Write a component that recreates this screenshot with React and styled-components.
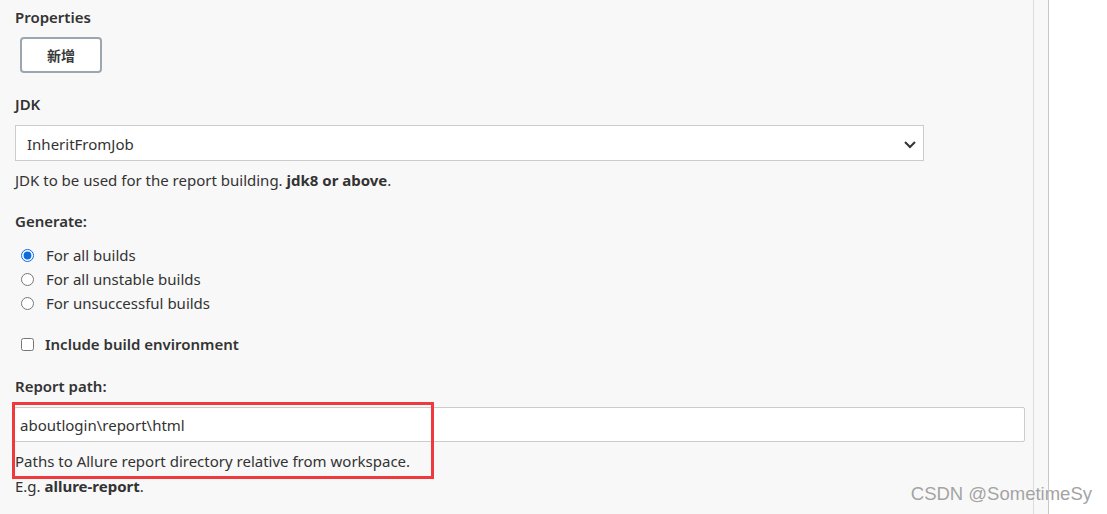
import styled, { createGlobalStyle } from "styled-components";

const GlobalStyle = createGlobalStyle`
  html, body {
    margin: 0;
    padding: 0;
    background: #ffffff;
  }
  body {
    font-family: "Noto Sans", "Open Sans", "Noto Sans CJK SC", sans-serif;
    color: #333333;
  }
`;

const Page = styled.div`
  display: flex;
  width: 1107px;
  height: 514px;
  overflow: hidden;
  position: relative;
`;

const Main = styled.div`
  width: 1033px;
  flex-shrink: 0;
  background: #f8f8f8;
  padding-left: 15px;
  box-sizing: border-box;
  display: flex;
  flex-direction: column;
`;

const Rule = styled.div`
  width: 1px;
  flex-shrink: 0;
  background: ${(p) => p.$color};
`;

const Strip = styled.div`
  width: 14px;
  flex-shrink: 0;
  background: #f8f8f8;
`;

const Side = styled.div`
  flex: 1;
  background: #ffffff;
`;

const Label = styled.div`
  font-size: 15px;
  font-weight: 600;
  line-height: 20px;
  margin-top: ${(p) => p.$top}px;
`;

const AddButton = styled.button`
  margin: 10px 0 0 5px;
  width: 82px;
  height: 36px;
  box-sizing: border-box;
  background: #ffffff;
  border: 2px solid #9ca6b0;
  border-radius: 4px;
  font-family: "Noto Sans CJK SC", sans-serif;
  font-size: 14px;
  font-weight: 700;
  color: #3a3a3a;
  padding: 0;
`;

const SelectBox = styled.div`
  margin-top: 11px;
  width: 909px;
  height: 36px;
  box-sizing: border-box;
  background: #ffffff;
  border: 1px solid #cccccc;
  display: flex;
  align-items: center;
  justify-content: space-between;
  padding: 2px 6px 0 11px;
  font-size: 15px;
`;

const Help = styled.div`
  font-size: 15px;
  line-height: ${(p) => p.$lh || 20}px;
  margin-top: ${(p) => p.$top}px;

  & b {
    font-weight: 700;
  }
`;

const OptionList = styled.div`
  margin-top: 12px;
  display: flex;
  flex-direction: column;
`;

const Option = styled.label`
  display: flex;
  align-items: center;
  height: 24px;
  font-size: 15px;
  font-weight: ${(p) => (p.$bold ? 600 : 400)};

  & input {
    margin: 0 ${(p) => (p.$bold ? 11 : 12)}px 0 6px;
    width: 13px;
    height: 13px;
    accent-color: #0b6be0;
  }
`;

const CheckRow = styled(Option)`
  margin-top: 17px;
`;

const PathBlock = styled.div`
  position: relative;
  display: flex;
  flex-direction: column;
`;

const TextInput = styled.div`
  margin: 11px 0 0 -1px;
  width: 1011px;
  height: 35px;
  box-sizing: border-box;
  background: #ffffff;
  border: 1px solid #cccccc;
  border-radius: 2px;
  display: flex;
  align-items: center;
  padding-left: 5px;
  font-size: 15px;
`;

const Highlight = styled.div`
  position: absolute;
  left: -3px;
  top: 46px;
  width: 422px;
  height: 77px;
  box-sizing: border-box;
  border: 3px solid #ee3a3c;
`;

const Watermark = styled.div`
  position: absolute;
  right: 15px;
  bottom: 9px;
  font-family: "Liberation Sans", Arial, sans-serif;
  font-size: 18.5px;
  color: #a3a3a3;
  text-shadow: 0 0 1px #ffffff;
`;

const Chevron = () => (
  <svg width="14" height="14" viewBox="0 0 14 14">
    <path d="M2 5 L7 10 L12 5" fill="none" stroke="#333" strokeWidth="2" />
  </svg>
);

const App = () => (
  <>
    <GlobalStyle />
    <Page>
      <Main>
        <Label $top={7}>Properties</Label>
        <AddButton>新增</AddButton>

        <Label $top={21}>JDK</Label>
        <SelectBox>
          <span>InheritFromJob</span>
          <Chevron />
        </SelectBox>
        <Help $top={9}>
          JDK to be used for the report building. <b>jdk8 or above</b>.
        </Help>

        <Label $top={21}>Generate:</Label>
        <OptionList>
          <Option>
            <input type="radio" name="gen" defaultChecked />
            For all builds
          </Option>
          <Option>
            <input type="radio" name="gen" />
            For all unstable builds
          </Option>
          <Option>
            <input type="radio" name="gen" />
            For unsuccessful builds
          </Option>
        </OptionList>

        <CheckRow $bold>
          <input type="checkbox" />
          Include build environment
        </CheckRow>

        <PathBlock>
          <Label $top={20}>Report path:</Label>
          <TextInput>aboutlogin\report\html</TextInput>
          <Help $top={7} $lh={25}>
            Paths to Allure report directory relative from workspace.
          </Help>
          <Help $top={0} $lh={25}>
            E.g. <b>allure-report</b>.
          </Help>
          <Highlight />
        </PathBlock>
      </Main>
      <Rule $color="#dcdcdc" />
      <Strip />
      <Rule $color="#c8c8c8" />
      <Side />
      <Watermark>CSDN @SometimeSy</Watermark>
    </Page>
  </>
);

export default App;
